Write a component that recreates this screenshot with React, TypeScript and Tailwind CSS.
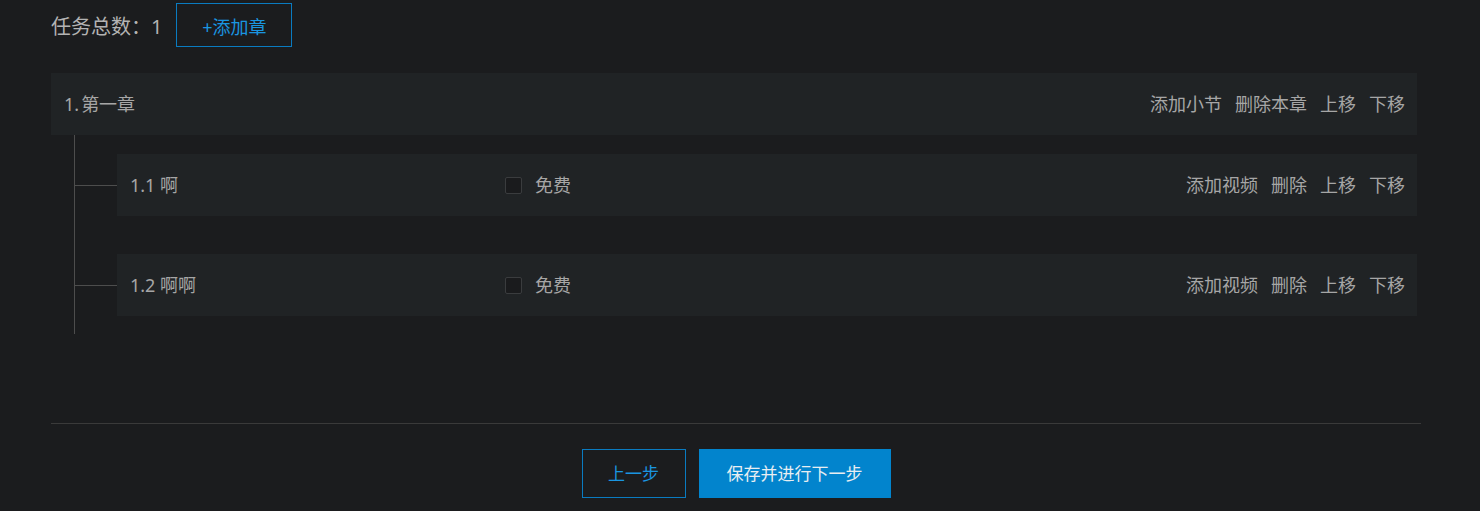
import React from 'react';

interface Section {
  no: string;
  title: string;
}

const sections: Section[] = [
  { no: '1.1', title: '啊' },
  { no: '1.2', title: '啊啊' },
];

const font = { fontFamily: '"Noto Sans", "Noto Sans CJK SC", sans-serif' };

const Actions: React.FC<{ items: string[] }> = ({ items }) => (
  <div className="flex items-center gap-[13px]">
    {items.map((t) => (
      <span key={t} className="cursor-pointer hover:text-[#0a84cc]">
        {t}
      </span>
    ))}
  </div>
);

export default function App() {
  return (
    <div
      className="min-h-[511px] w-full bg-[#1b1c1e] text-[18px] text-[#a6a6a6] overflow-hidden"
      style={font}
    >
      <div className="w-[1370px] ml-[51px] pt-[3px]">
        {/* header */}
        <div className="flex items-center h-[44px]">
          <span className="mt-[4px] text-[20px] text-[#b3b3b3] leading-none">任务总数：1</span>
          <button className="ml-[14px] w-[116px] h-[44px] pt-[3px] border border-[#0a7bc0] text-[#1a95e0] text-[18px] leading-none">
            +添加章
          </button>
        </div>

        {/* chapter */}
        <div className="mt-[26px] w-[1366px]">
          <div className="h-[62px] bg-[#202325] flex items-center justify-between pl-[13px] pr-[12px] leading-none">
            <span>
              1.<span className="ml-[2px]">第一章</span>
            </span>
            <Actions items={['添加小节', '删除本章', '上移', '下移']} />
          </div>

          <div className="ml-[23px] border-l border-[#4d4d4d] pt-[19px] pb-[18px] flex flex-col gap-[38px]">
            {sections.map((s) => (
              <div key={s.no} className="flex items-center">
                <div className="w-[42px] h-px bg-[#4d4d4d]" />
                <div className="flex-1 h-[62px] bg-[#202325] flex items-center pl-[13px] pr-[12px] leading-none">
                  <span className="w-[375px]">
                    {s.no} {s.title}
                  </span>
                  <label className="flex items-center gap-[13px]">
                    <span className="w-[17px] h-[17px] rounded-[2px] border border-[#3a3c3e] bg-[#1a1b1d]" />
                    <span>免费</span>
                  </label>
                  <div className="ml-auto">
                    <Actions items={['添加视频', '删除', '上移', '下移']} />
                  </div>
                </div>
              </div>
            ))}
          </div>
        </div>

        {/* footer */}
        <div className="mt-[89px] h-px bg-[#3a3a3a]" />
        <div className="flex justify-center gap-[13px] mt-[25px]">
          <button className="w-[104px] h-[49px] border border-[#0a7bc0] text-[#1a95e0] text-[17px] leading-none">
            上一步
          </button>
          <button className="w-[192px] h-[49px] bg-[#0284cd] text-[#e8eef2] text-[17px] leading-none">
            保存并进行下一步
          </button>
        </div>
      </div>
    </div>
  );
}
